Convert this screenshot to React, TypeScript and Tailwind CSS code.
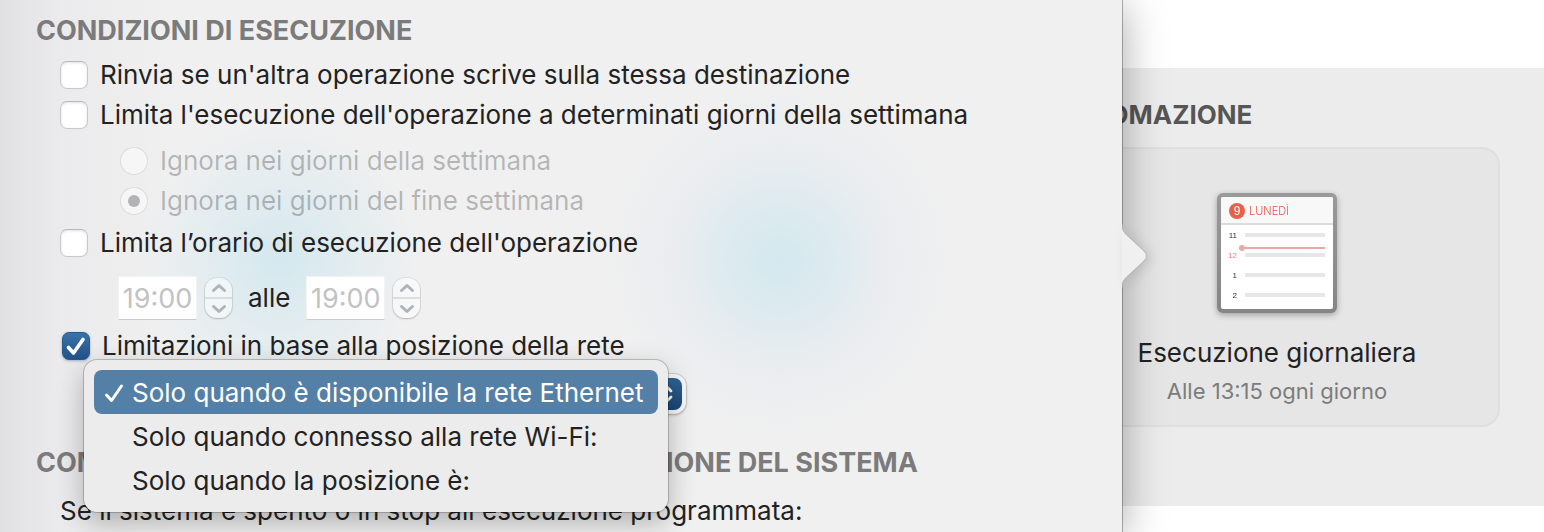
import { useState } from 'react'
import type { ReactNode } from 'react'

const networkOptions = [
  'Solo quando è disponibile la rete Ethernet',
  'Solo quando connesso alla rete Wi-Fi:',
  'Solo quando la posizione è:',
]

type CheckRowProps = {
  children: ReactNode
  defaultChecked?: boolean
}

function CheckRow({ children, defaultChecked }: CheckRowProps) {
  return (
    <label className="flex h-10 items-center gap-3">
      <span className="relative size-7">
        <input
          type="checkbox"
          defaultChecked={defaultChecked}
          className="peer block size-7 appearance-none rounded-[7px] border border-[#c9c9c9] border-t-[#b8b8b8] bg-white shadow-[inset_0_1px_3px_rgba(0,0,0,0.12)] checked:border-[#28598c] checked:bg-linear-to-b checked:from-[#3a73a8] checked:to-[#235288] checked:shadow-[0_1px_3px_rgba(40,90,150,0.4)]"
        />
        <svg viewBox="0 0 28 28" className="pointer-events-none absolute inset-0 hidden peer-checked:block" fill="none">
          <path d="M6.5 15.5 L11.5 21 L21 7.5" stroke="#fff" strokeWidth="3.6" strokeLinecap="round" strokeLinejoin="round" />
        </svg>
      </span>
      {children}
    </label>
  )
}

function RadioRow({ children, defaultChecked }: CheckRowProps) {
  return (
    <label className="flex h-10 items-center gap-3 text-black/25">
      <span className="relative size-7">
        <input
          type="radio"
          name="skip-days"
          disabled
          defaultChecked={defaultChecked}
          className="peer block size-7 appearance-none rounded-full border border-black/10 bg-white/45"
        />
        <span className="pointer-events-none absolute inset-2 hidden rounded-full bg-[#b3b3b5] peer-checked:block" />
      </span>
      {children}
    </label>
  )
}

function Chevron({ up }: { up?: boolean }) {
  return (
    <svg viewBox="0 0 16 10" className="h-[10px] w-4" fill="none">
      <path d={up ? 'M2.5 7.5 L8 2.5 L13.5 7.5' : 'M2.5 2.5 L8 7.5 L13.5 2.5'} stroke="#aeb4b8" strokeWidth="3" strokeLinecap="round" strokeLinejoin="round" />
    </svg>
  )
}

function TimeField({ label }: { label: string }) {
  return (
    <div className="flex items-center gap-2">
      <input
        type="text"
        aria-label={label}
        defaultValue="19:00"
        disabled
        className="h-11 w-[79px] border border-black/5 border-b-black/20 bg-white text-center text-[27px] text-[#c2c2c2]"
      />
      <div className="flex h-10 w-[27px] flex-col divide-y-2 divide-black/10 rounded-[12px] bg-white/50 shadow-[0_0_0_1px_rgba(0,0,0,0.06),0_1px_2px_rgba(0,0,0,0.2)]">
        <button type="button" disabled aria-label="Aumenta" className="flex flex-1 items-center justify-center">
          <Chevron up />
        </button>
        <button type="button" disabled aria-label="Riduci" className="flex flex-1 items-center justify-center">
          <Chevron />
        </button>
      </div>
    </div>
  )
}

function NetworkSelect() {
  const [selected, setSelected] = useState(0)

  return (
    <div className="relative ml-[94px] mt-2 h-10 w-[592px]">
      <select
        aria-label="Limitazione di rete"
        value={selected}
        onChange={(e) => setSelected(Number(e.target.value))}
        className="h-10 w-full appearance-none rounded-[12px] bg-[#f6f8fa] px-3 shadow-[0_0_0_1px_rgba(0,0,0,0.1),0_1px_3px_rgba(0,0,0,0.25)]"
      >
        {networkOptions.map((option, i) => (
          <option key={option} value={i}>{option}</option>
        ))}
      </select>
      <span className="pointer-events-none absolute right-1 top-1 flex h-8 w-8 items-center justify-center rounded-[8px] bg-linear-to-b from-[#2f6596] to-[#1b4673]">
        <svg viewBox="0 0 16 24" className="h-6 w-4" fill="none">
          <path d="M3 9 L8 4 L13 9 M3 15 L8 20 L13 15" stroke="#fff" strokeWidth="2.8" strokeLinecap="round" strokeLinejoin="round" />
        </svg>
      </span>

      <div role="listbox" className="absolute -left-[10px] -top-[14px] z-10 w-[584px] rounded-[13px] bg-[#ececec] p-[10px] shadow-[0_0_0_1px_rgba(0,0,0,0.2),0_10px_28px_rgba(0,0,0,0.28)]">
        {networkOptions.map((option, i) => (
          <button
            key={option}
            type="button"
            role="option"
            aria-selected={i === selected}
            onClick={() => setSelected(i)}
            className="flex h-11 w-full items-center rounded-[8px] pt-0.5 pl-[10px] text-left aria-selected:bg-[#5480a8] aria-selected:text-white"
          >
            <span className="w-7">
              {i === selected ? (
                <svg viewBox="0 0 20 22" className="h-[22px] w-5" fill="none">
                  <path d="M2.5 13 L7.5 18.5 L17.5 4" stroke="#fff" strokeWidth="3" strokeLinecap="round" strokeLinejoin="round" />
                </svg>
              ) : null}
            </span>
            {option}
          </button>
        ))}
      </div>
    </div>
  )
}

function CalendarIcon() {
  return (
    <svg viewBox="0 0 120 120" className="size-[120px] drop-shadow-[0_2px_3px_rgba(0,0,0,0.3)]">
      <defs>
        <linearGradient id="frame" x1="0" y1="0" x2="0" y2="1">
          <stop offset="0" stopColor="#9a9a9a" />
          <stop offset="1" stopColor="#858585" />
        </linearGradient>
      </defs>
      <rect width="120" height="120" rx="6" fill="url(#frame)" />
      <rect x="4" y="4" width="112" height="112" rx="2" fill="#fff" />
      <path d="M4 6 a2 2 0 0 1 2 -2 h108 a2 2 0 0 1 2 2 v24 h-112 z" fill="#f8f8f8" />
      <rect x="4" y="30" width="112" height="2" fill="#dcdcdc" />
      <circle cx="20" cy="18" r="8" fill="#e8604c" />
      <g fontFamily="Liberation Sans, Arial, sans-serif">
        <text x="20" y="22" fontSize="12" textAnchor="middle" fill="#fff">9</text>
        <text x="32" y="22" fontSize="11" fontFamily="Inter, sans-serif" fontWeight="300" fill="#e05848">LUNEDÌ</text>
        <g fontSize="8" textAnchor="end">
          <text x="20" y="45" fill="#333">11</text>
          <text x="20" y="65" fill="#ea7f76">12</text>
          <text x="20" y="85" fill="#333">1</text>
          <text x="20" y="105" fill="#333">2</text>
        </g>
      </g>
      <g fill="#e7e7e7">
        <rect x="28" y="40" width="80" height="4" />
        <rect x="28" y="60" width="80" height="4" />
        <rect x="28" y="80" width="80" height="4" />
        <rect x="28" y="100" width="80" height="4" />
      </g>
      <rect x="25" y="54" width="83" height="2" fill="#eca8a2" />
      <circle cx="25" cy="55" r="3" fill="#eca8a2" />
    </svg>
  )
}

export default function App() {
  return (
    <div className="flex min-h-screen overflow-hidden bg-white font-[Inter,'Liberation_Sans',sans-serif] text-[26px] leading-8 text-[#222]">
      <main className="relative z-10 min-w-0 flex-1 bg-[#f0f0f0] bg-[radial-gradient(circle_at_280px_260px,#d3e8ef_0,#d3e8ef99_50px,transparent_140px),radial-gradient(circle_at_780px_260px,#d3e8ef_0,#d3e8ef99_60px,#dbe5f04d_105px,transparent_175px),linear-gradient(to_right,#e1e1e4,#ebebed_60px,#f0f0f0_180px)] pt-[15px] whitespace-nowrap shadow-[0_0_0_1px_rgba(0,0,0,0.28),0_6px_40px_rgba(0,0,0,0.35)]">
        <h2 className="pl-9 text-[27px] font-bold text-[#7b7b7b]">CONDIZIONI DI ESECUZIONE</h2>

        <div className="mt-2 pl-[60px]">
          <CheckRow>Rinvia se un'altra operazione scrive sulla stessa destinazione</CheckRow>
          <CheckRow>Limita l'esecuzione dell'operazione a determinati giorni della settimana</CheckRow>
          <div className="mt-1.5 pl-[60px]">
            <RadioRow>Ignora nei giorni della settimana</RadioRow>
            <RadioRow defaultChecked>Ignora nei giorni del fine settimana</RadioRow>
          </div>
          <div className="mt-0.5">
            <CheckRow>Limita l’orario di esecuzione dell'operazione</CheckRow>
          </div>
          <div className="mt-[13px] flex items-center gap-4 pl-[58px]">
            <TimeField label="Dalle" />
            <span>alle</span>
            <TimeField label="Alle" />
          </div>
          <div className="mt-1.5 pl-0.5">
            <CheckRow defaultChecked>Limitazioni in base alla posizione della rete</CheckRow>
          </div>
        </div>

        <NetworkSelect />

        <h2 className="mt-[33px] pl-9 text-[27px] font-bold text-[#7b7b7b]">COMPORTAMENTO RIATTIVAZIONE E SOSPENSIONE DEL SISTEMA</h2>
        <p className="mt-4 pl-[60px]">Se il sistema è spento o in stop all'esecuzione programmata:</p>

        <svg viewBox="0 0 26 64" className="absolute left-full top-[224px] h-16 w-[26px] drop-shadow-[4px_2px_6px_rgba(0,0,0,0.12)]">
          <path d="M-2 0 H0 C0 7 3 10 8 14 L22 27 Q27 32 22 37 L8 50 C3 54 0 57 0 64 H-2 Z" fill="#f0f0f0" />
          <path d="M0 0 C0 7 3 10 8 14 L22 27 Q27 32 22 37 L8 50 C3 54 0 57 0 64" fill="none" stroke="#b4b4b4" />
        </svg>
      </main>

      {/* slides under the popover on its left side */}
      <aside className="-ml-[68px] mt-[68px] w-[490px] shrink-0 self-start bg-[#ececec] pt-[31px] pr-11 pb-[79px]">
        <h2 className="font-bold text-[#565656]">AUTOMAZIONE</h2>
        <div className="mt-4 flex flex-col items-center rounded-[18px] border-2 border-[#dfdfdf] bg-[#e6e6e6] pt-11 pb-[22px]">
          <CalendarIcon />
          <h3 className="mt-6">Esecuzione giornaliera</h3>
          <p className="mt-2.5 text-[22px] leading-6 text-[#7c7c7c]">Alle 13:15 ogni giorno</p>
        </div>
      </aside>
    </div>
  )
}
